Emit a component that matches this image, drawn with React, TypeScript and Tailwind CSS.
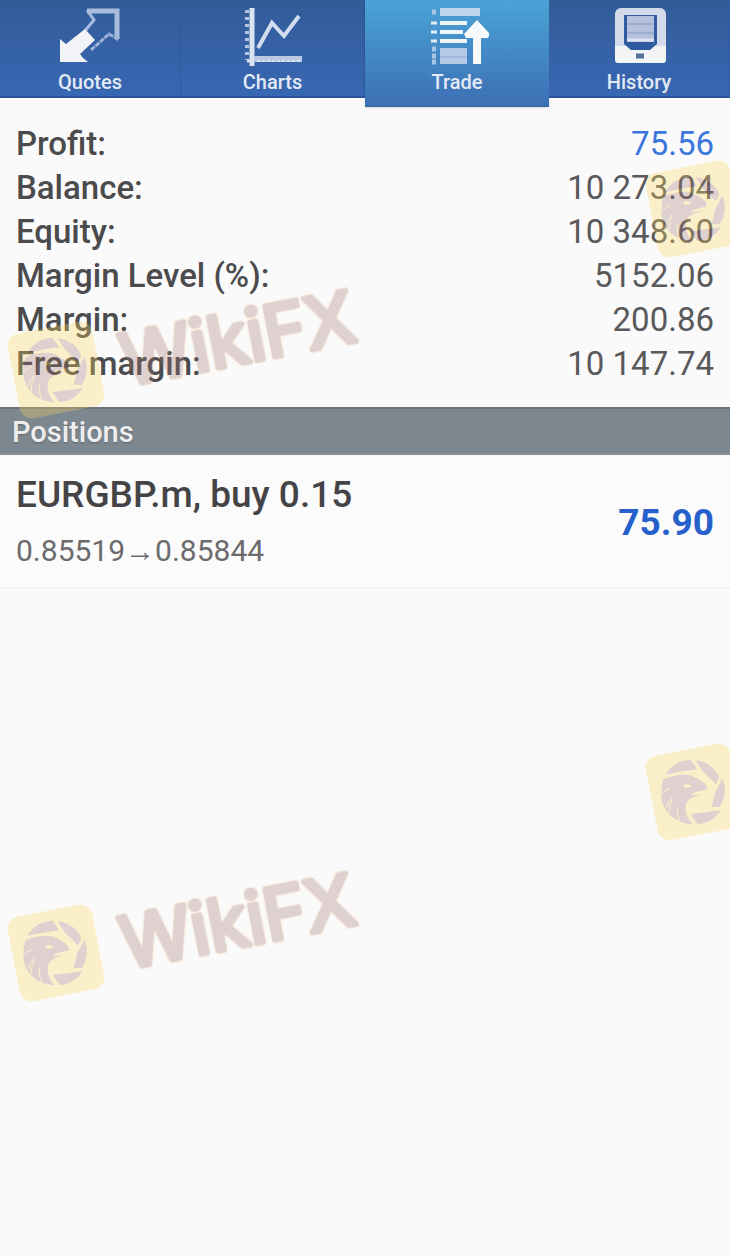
import type { ReactNode } from "react";

const summary = [
  { label: "Profit:", value: "75.56", positive: true },
  { label: "Balance:", value: "10 273.04" },
  { label: "Equity:", value: "10 348.60" },
  { label: "Margin Level (%):", value: "5152.06" },
  { label: "Margin:", value: "200.86" },
  { label: "Free margin:", value: "10 147.74" },
];

function QuotesIcon() {
  return (
    <svg viewBox="0 0 64 60" className="h-[60px] w-16" aria-hidden="true">
      <path d="M29 5h30v28" fill="none" stroke="#a9bcde" strokeWidth="5" />
      <path d="M29 4l7 10-10 12" fill="none" stroke="#a9bcde" strokeWidth="3" />
      <path d="M33 44l9-8 9-8 10 6" fill="none" stroke="#9cb2da" strokeWidth="3" strokeDasharray="5 1" />
      <path d="M2 33l6 5 19-15 10 11-15 14 3 4 5 4H2z" fill="#f1f3f6" />
    </svg>
  );
}

function ChartsIcon() {
  return (
    <svg viewBox="0 0 64 60" className="h-[60px] w-16" aria-hidden="true">
      <path d="M11 2v58" fill="none" stroke="#dbe3f1" strokeWidth="5" />
      <path d="M6 4v50" fill="none" stroke="#b5c5e1" strokeWidth="4" strokeDasharray="3 4" />
      <path d="M6 55h7" stroke="#dbe3f1" strokeWidth="3" />
      <path d="M13 53h48" fill="none" stroke="#b9c8e3" strokeWidth="6" />
      <path d="M16 55h45" fill="none" stroke="#d9e1f0" strokeWidth="2" strokeDasharray="3 2" />
      <path d="M17 42l14-25 12 13 15-20" fill="none" stroke="#d3ddee" strokeWidth="4" />
    </svg>
  );
}

function TradeIcon() {
  return (
    <svg viewBox="0 0 64 60" className="h-[60px] w-16" aria-hidden="true">
      <path d="M7 6h4M7 43h4M7 50h4M7 56h4" stroke="#a9c6e4" strokeWidth="5" />
      <path d="M6 17h6M6 26h6M6 35h6" stroke="#e4edf6" strokeWidth="3" />
      <path d="M15 6h40" stroke="#bfd4ea" strokeWidth="8" />
      <path d="M15 17h27M15 26h23M15 35h27" stroke="#f0f5fa" strokeWidth="4" />
      <path d="M15 50h27" stroke="#b3c9e5" strokeWidth="16" />
      <path d="M15 51h27" stroke="#9fbbe0" strokeWidth="2" />
      <path d="M52 14l13 14-2 4h-7v26h-8V32h-7l-2-4z" fill="#f6f8fa" />
    </svg>
  );
}

function HistoryIcon() {
  return (
    <svg viewBox="0 0 64 60" className="h-[60px] w-16" aria-hidden="true">
      <rect x="8" y="2" width="51" height="55" rx="6" fill="#d3dbea" />
      <path d="M8 40h51v14q0 3-3 3H11q-3 0-3-3z" fill="#f3f4f6" />
      <path d="M17 9h33v29l-7 6H24l-7-6z" fill="#2f5c9f" />
      <path d="M20 10h27v26H20z" fill="#b4c0dc" />
      <path d="M20 18h27M20 27h27" stroke="#9dadd0" strokeWidth="2" />
      <path d="M20 34h27" stroke="#dce3ef" strokeWidth="3" />
      <path d="M29 50h8" stroke="#54729f" strokeWidth="5" />
    </svg>
  );
}

function Tab({ label, icon, active = false }: { label: string; icon: ReactNode; active?: boolean }) {
  return (
    <button
      type="button"
      aria-current={active ? "page" : undefined}
      className={
        active
          ? "flex h-[107px] flex-col items-center border-b-2 border-[#3a68a8] bg-linear-to-b from-[#4ba3d7] to-[#3c70b4] pt-[6px] shadow-sm"
          : "flex h-[98px] flex-col items-center border-r border-b-2 border-r-[#2e5a9b] border-b-[#2b539b] bg-linear-to-b from-[#325c98] to-[#3867b3] pt-[6px]"
      }
    >
      {icon}
      <span className="mt-1 text-[20px] leading-6 font-medium text-[#e3eaf5]">{label}</span>
    </button>
  );
}

function Watermark({ className, withName = false }: { className: string; withName?: boolean }) {
  return (
    <svg
      viewBox="0 0 370 150"
      className={`pointer-events-none absolute h-[150px] w-[370px] overflow-visible opacity-30 ${className}`}
      aria-hidden="true"
    >
      <rect x="13" y="50" width="86" height="86" rx="12" fill="#ffd95f" transform="rotate(-11 56 93)" />
      <g transform="translate(0 35) scale(.3333)" fill="#a3756e">
        <path d="M84 121C98 94 125 78 158 77L178 106Q128 111 84 122z" />
        <path d="M173 79C208 83 236 106 244 132L234 151L196 114z" />
        <path d="M253 134C267 164 260 198 245 219L221 219L232 174z" />
        <path d="M158 240L249 229C229 258 203 270 178 270z" />
        <path d="M76 136Q120 118 158 124Q178 134 193 143Q206 150 207 166Q185 171 164 177L161 183L196 181Q166 186 154 196C136 212 140 243 163 271C112 268 73 235 70 186Q69 158 76 136z" />
        <path
          d="M70 181Q82 168 96 163M82 224Q89 205 103 189M93 239Q92 214 103 195M126 264Q115 243 118 218"
          fill="none"
          stroke="#ffd95f"
          strokeWidth="3"
        />
        <path d="M136 152Q148 147 160 155Q151 165 137 158z" fill="#ffd95f" />
      </g>
      {withName && (
        <text
          x="126"
          y="109"
          transform="rotate(-11 126 109)"
          fill="#a3756e"
          stroke="#a3756e"
          strokeWidth="5"
          strokeLinejoin="round"
          className="font-['Inter'] text-[72px] font-normal drop-shadow-[0_0_1px_#ffb84f]"
        >
          WikiFX
        </text>
      )}
    </svg>
  );
}

export default function App() {
  return (
    <main className="relative min-h-screen overflow-hidden bg-[#fafafa] font-['Roboto','Liberation_Sans',sans-serif] text-[#4b4b4d]">
      <nav className="grid h-[98px] grid-cols-[181fr_184fr_184fr_181fr] items-start" aria-label="Main">
        <Tab label="Quotes" icon={<QuotesIcon />} />
        <Tab label="Charts" icon={<ChartsIcon />} />
        <Tab label="Trade" icon={<TradeIcon />} active />
        <Tab label="History" icon={<HistoryIcon />} />
      </nav>

      <dl className="px-4 pt-6 pb-[21px]">
        {summary.map((row) => (
          <div key={row.label} className="flex h-11 items-center justify-between">
            <dt className="text-[33px] font-medium">{row.label}</dt>
            <dd className={row.positive ? "text-[33px] text-[#3b76dc]" : "text-[33px] text-[#59595b]"}>{row.value}</dd>
          </div>
        ))}
      </dl>

      <section>
        <h2 className="flex h-12 items-center border-t-2 border-b-2 border-t-[#6b747d] border-b-[#8b9093] bg-[#7d878f] px-3 pt-1 text-[29px] font-medium text-[#eeeeef] text-shadow-sm">
          Positions
        </h2>
        <div className="flex items-center justify-between border-b-2 border-[#f1f1f2] bg-[#fbfbfc] px-4 pt-4 pb-3">
          <div>
            <h3 className="text-[37px] leading-12 font-medium text-[#444447]">EURGBP.m, buy 0.15</h3>
            <p className="flex pt-2 text-[30px] leading-12 text-[#6b6b6d]">
              0.85519
              <span className="font-['Liberation_Sans']">→</span>
              0.85844
            </p>
          </div>
          <strong className="text-[37px] leading-12 font-bold text-[#2560cb]">75.90</strong>
        </div>
      </section>

      <Watermark className="top-[277px] left-0" withName />
      <Watermark className="top-[116px] -right-[278px]" />
      <Watermark className="top-[860px] left-0" withName />
      <Watermark className="top-[699px] -right-[278px]" />
    </main>
  );
}
